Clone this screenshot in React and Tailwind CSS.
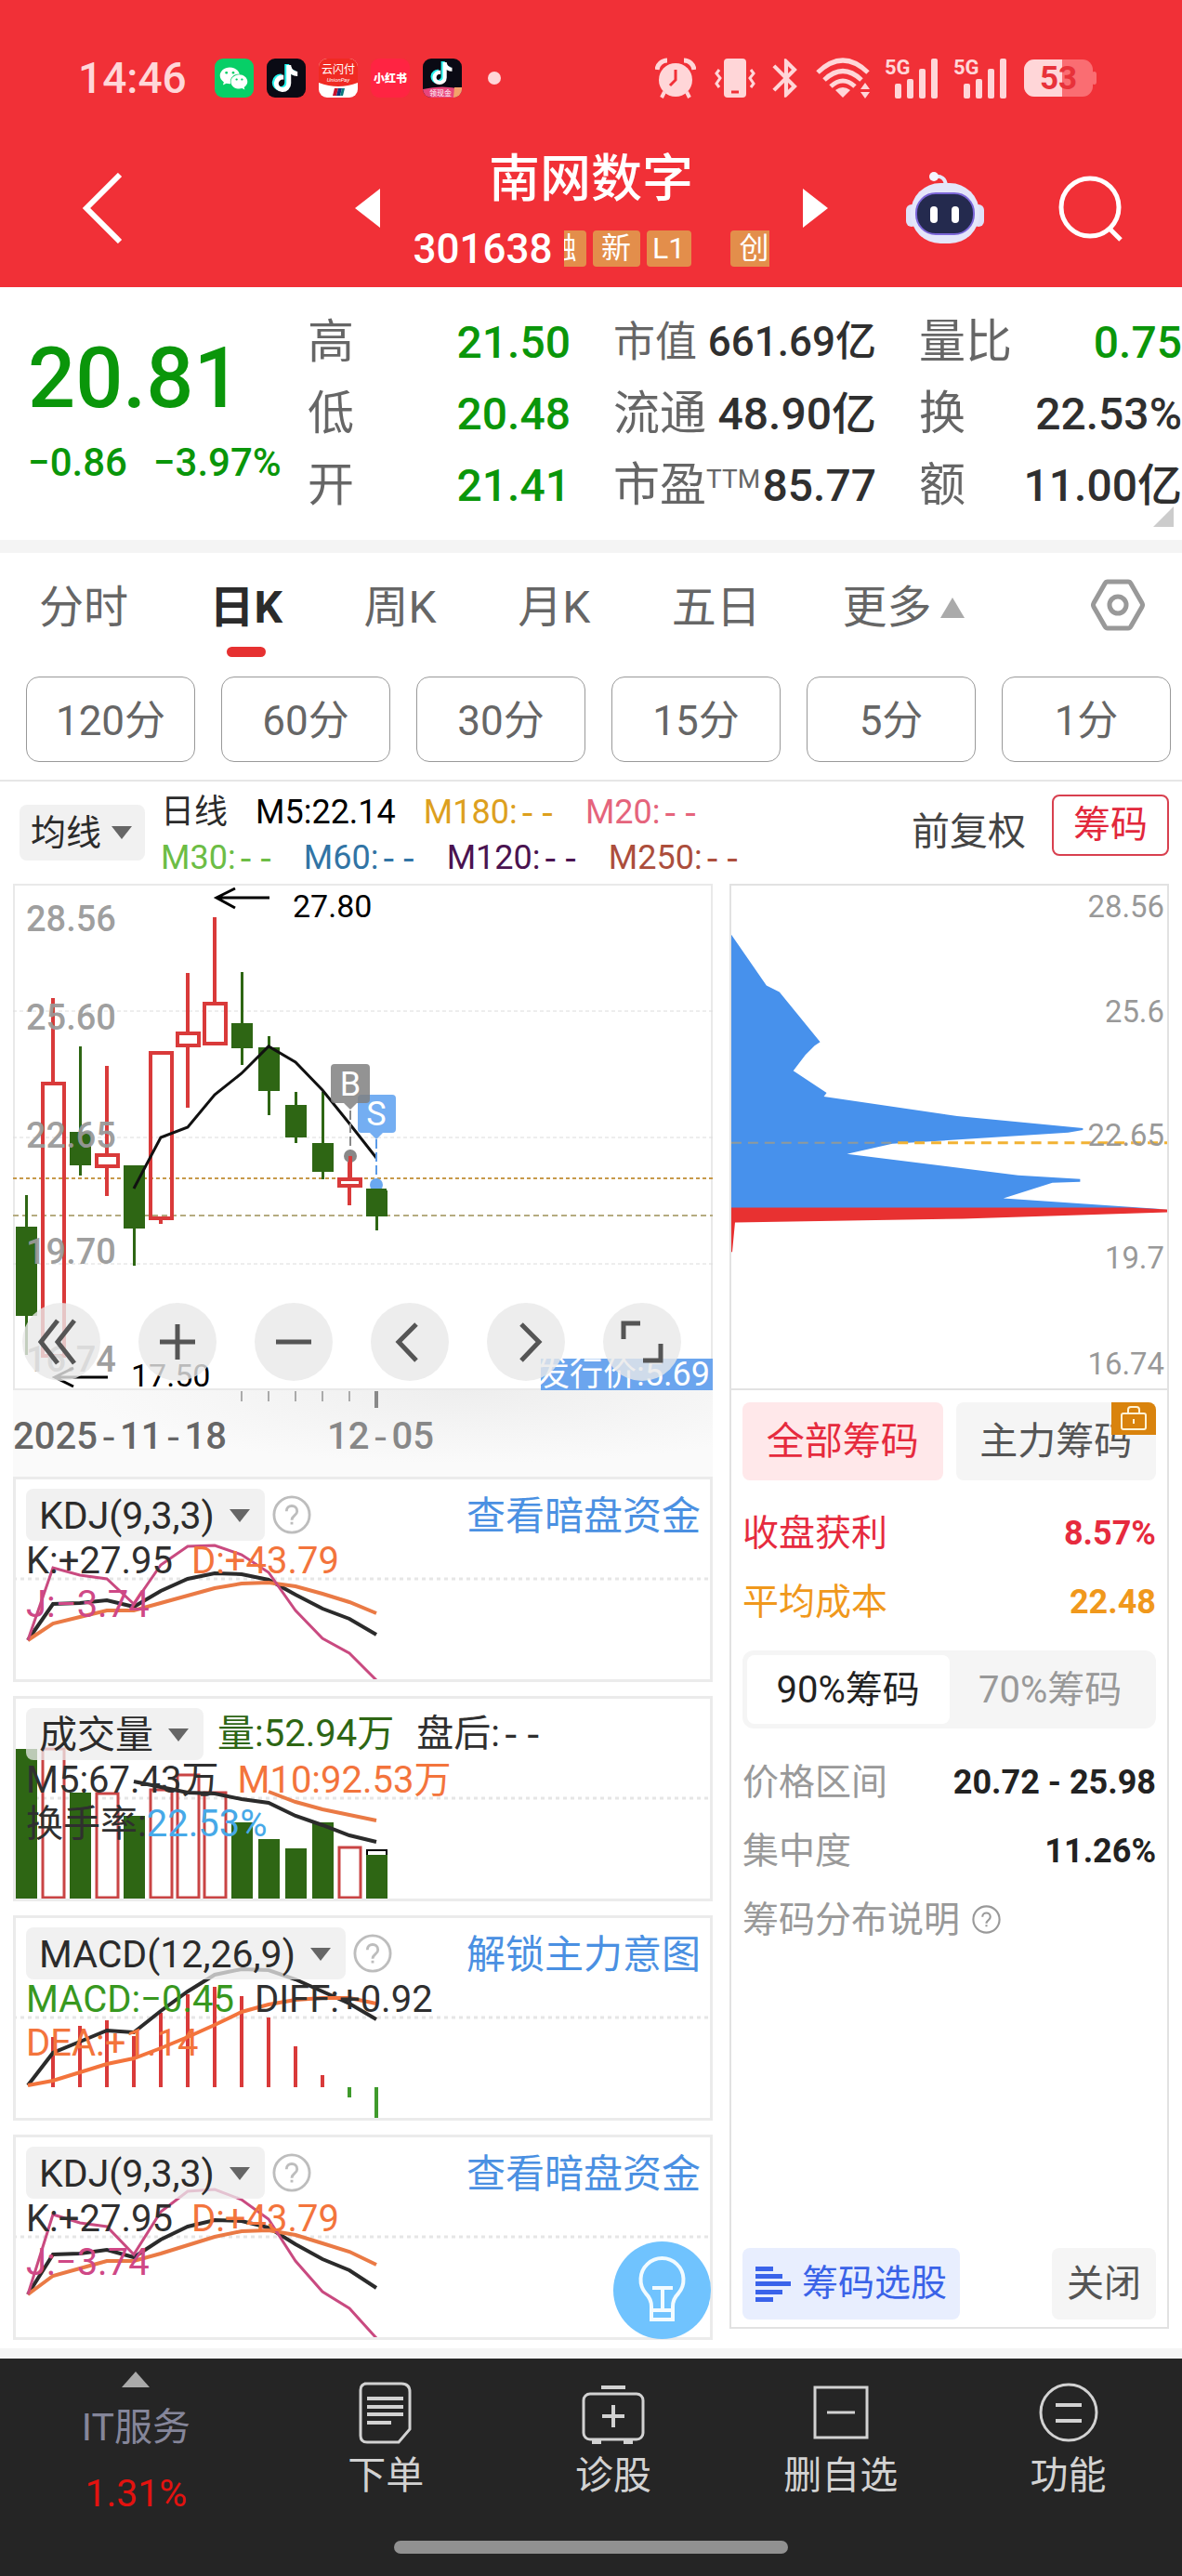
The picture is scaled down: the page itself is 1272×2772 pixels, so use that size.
import React, { useState } from "react";
import { FaWeixin } from "react-icons/fa";
import { FaTiktok } from "react-icons/fa6";
import { MdBluetooth } from "react-icons/md";

const candles = [
  { up: false, high: 335, top: 369, bottom: 465, low: 507 },
  { up: true, high: 123, top: 215, bottom: 508, low: 508 },
  { up: false, high: 175, top: 267, bottom: 303, low: 314 },
  { up: true, high: 196, top: 292, bottom: 304, low: 336 },
  { up: false, high: 303, top: 303, bottom: 371, low: 411 },
  { up: true, high: 182, top: 182, bottom: 360, low: 366 },
  { up: true, high: 96, top: 161, bottom: 174, low: 241 },
  { up: true, high: 36, top: 129, bottom: 172, low: 172 },
  { up: false, high: 95, top: 150, bottom: 177, low: 195 },
  { up: false, high: 164, top: 176, bottom: 223, low: 249 },
  { up: false, high: 224, top: 238, bottom: 273, low: 279 },
  { up: false, high: 224, top: 279, bottom: 310, low: 318 },
  { up: true, high: 293, top: 318, bottom: 325, low: 346 },
  { up: false, high: 325, top: 330, bottom: 358, low: 373 },
];

const volumes = [57, 57, 104, 105, 129, 101, 85, 104, 136, 154, 164, 136, 163, 171];
const volumeUp = [0, 1, 0, 1, 0, 1, 1, 1, 0, 0, 0, 0, 1, 0];

const kLine = [176, 137, 136, 133, 140, 123, 110, 104, 105, 111, 127, 142, 153, 170];
const dLine = [176, 158, 151, 144, 144, 136, 128, 120, 115, 114, 118, 126, 135, 147];
const jLine = [176, 98, 106, 110, 137, 95, 75, 74, 84, 103, 144, 174, 190, 219];

const diffLine = [183, 148, 136, 124, 126, 103, 82, 64, 58, 59, 69, 82, 95, 112];
const deaLine = [183, 178, 169, 160, 154, 143, 131, 118, 104, 96, 91, 89, 89, 95];
const macdBars = [185, 131, 119, 113, 130, 105, 85, 77, 87, 110, 141, 172, 196, 220];

const cx = (i) => 14 + i * 29;

// index of the first point, so that shorter averages start further right
const toPoints = (values, start = 0) =>
  values.map((y, i) => `${cx(i + start) + (i + start === 0 ? 2 : 0)},${y}`).join(" ");

function Help({ className }) {
  return (
    <svg viewBox="0 0 44 44" className={className} fill="none" stroke="currentColor" strokeWidth="3">
      <circle cx="22" cy="22" r="20" />
      <path d="M16 18c0-8 12-8 12 0 0 5-6 5-6 10M22 30v3" />
    </svg>
  );
}

function Picker({ label, options, className = "" }) {
  return (
    <label className={`relative inline-flex items-center rounded-lg bg-[#ececec]/75 ${className}`}>
      <select
        aria-label={label}
        className="appearance-none bg-transparent outline-none text-[#2b2b2b] pl-[14px] pr-[54px] h-full"
      >
        {options.map((o) => (
          <option key={o}>{o}</option>
        ))}
      </select>
      <svg viewBox="0 0 22 14" className="absolute right-[16px] w-[22px] h-[14px] pointer-events-none">
        <path d="M0 0h22L11 14z" fill="#666" />
      </svg>
    </label>
  );
}

function Signal({ className }) {
  return (
    <svg viewBox="0 0 58 44" className={`w-[58px] h-[44px] overflow-visible ${className}`} fill="currentColor">
      <text x="0" y="18" fontSize="22" fontWeight="700">5G</text>
      <rect x="11" y="28" width="7" height="16" rx="2" />
      <rect x="24" y="23" width="7" height="21" rx="2" />
      <rect x="37" y="12" width="7" height="32" rx="2" />
      <rect x="50" y="1" width="7" height="43" rx="2" />
    </svg>
  );
}

function StatusBar() {
  return (
    <div className="flex items-center justify-between h-[56px] pl-[84px] pr-[92px] text-[#ffd6d8]">
      <div className="flex items-center gap-[14px]">
        <span className="text-[46px] leading-none font-medium mr-[16px]">14:46</span>
        <span className="w-[42px] h-[42px] rounded-[9px] bg-[#07cf67] flex items-center justify-center">
          <FaWeixin className="w-[31px] h-[31px] text-white" />
        </span>
        <span className="w-[42px] h-[42px] rounded-[9px] bg-[#0a0a14] flex items-center justify-center">
          <FaTiktok className="w-[29px] h-[29px] text-white drop-shadow-[-2px_-1px_0_#25f4ee]" />
        </span>
        <svg viewBox="0 0 42 42" className="w-[42px] h-[42px] rounded-[9px] bg-white">
          <path d="M0 0h42v26q-21 8-42 0z" fill="#f02a23" />
          <text x="21" y="16" fontSize="12" textAnchor="middle" fill="#fff">云闪付</text>
          <text x="21" y="25" fontSize="6" fontStyle="italic" textAnchor="middle" fill="#fff">UnionPay</text>
          <path d="M17 32h4l-2 8h-4z" fill="#c8102e" />
          <path d="M21 32h4l-2 8h-4z" fill="#12357c" />
          <path d="M25 32h3l-2 8h-3z" fill="#0a7b80" />
        </svg>
        <svg viewBox="0 0 42 42" className="w-[42px] h-[42px] rounded-[9px] bg-[#ff2442]">
          <text x="21" y="26" fontSize="12" fontWeight="900" textAnchor="middle" fill="#fff">小红书</text>
        </svg>
        <span className="relative w-[42px] h-[42px] rounded-[9px] bg-[#0a0a14] flex justify-center overflow-hidden pt-[4px]">
          <FaTiktok className="w-[24px] h-[24px] text-white drop-shadow-[-2px_-1px_0_#25f4ee]" />
          <svg viewBox="0 0 42 12" className="absolute left-0 bottom-0 w-[42px] h-[12px]">
            <path d="M0 3q21-5 42 0v9H0z" fill="#e8457c" />
            <path d="M34 1h8v11h-9z" fill="#f3a36a" />
            <text x="19" y="10" fontSize="8" textAnchor="middle" fill="#fff">领现金</text>
          </svg>
        </span>
        <span className="w-[14px] h-[14px] rounded-full bg-[#ffd6d8] ml-[14px]" />
      </div>

      <div className="flex items-center">
        <svg viewBox="0 0 44 44" className="w-[44px] h-[44px]" fill="none">
          <path d="M2 13a11 11 0 0 1 11-10M42 13a11 11 0 0 0-11-10" stroke="currentColor" strokeWidth="5" />
          <path d="M10 37l-3 6M34 37l3 6" stroke="currentColor" strokeWidth="4" />
          <circle cx="22" cy="24" r="18" fill="currentColor" />
          <path d="M22 13v11l-6 6" stroke="#f13037" strokeWidth="3" />
        </svg>
        <svg viewBox="0 0 44 44" className="w-[44px] h-[44px] ml-[20px]" fill="none">
          <rect x="10" y="1" width="24" height="42" rx="4" fill="currentColor" />
          <path d="M18 37h8" stroke="#f13037" strokeWidth="3" />
          <path d="M5 13l-3 4 4 5-4 6 3 4M39 13l3 4-4 5 4 6-3 4" stroke="currentColor" strokeWidth="3" />
        </svg>
        <MdBluetooth className="w-[50px] h-[50px] ml-[8px]" />
        <svg viewBox="0 0 60 44" className="w-[60px] h-[44px] ml-[7px]" fill="none">
          <path d="M2 16q27-26 54 0M9 24q20-19 40 0M16 31q13-12 26 0" stroke="currentColor" strokeWidth="5" />
          <path d="M29 43l-8-8q8-6 16 0z" fill="currentColor" />
          <path d="M48 34l5-7 5 7zM48 37l5 7 5-7z" fill="currentColor" />
        </svg>
        <Signal className="ml-[14px]" />
        <Signal className="ml-[16px]" />
        <svg viewBox="0 0 78 42" className="w-[78px] h-[42px] ml-[18px]">
          <rect x="0" y="1" width="74" height="40" rx="11" fill="#fa6d72" />
          <rect x="73" y="14" width="5" height="14" rx="3" fill="#fa6d72" />
          <path d="M11 1h30v40H11a11 11 0 0 1-11-11V12A11 11 0 0 1 11 1z" fill="#ffd6d8" />
          <text x="37" y="33" fontSize="35" fontWeight="700" textAnchor="middle" fill="#e8323a">53</text>
        </svg>
      </div>
    </div>
  );
}

function Header() {
  const tag = "shrink-0 h-[39px] rounded-[4px] bg-[#e38e4b] text-[32px] leading-[39px] text-center text-white";
  return (
    <header className="bg-[#f13037] text-white pt-[56px] h-[309px]">
      <StatusBar />
      <div className="grid grid-cols-[1fr_auto_1fr] items-center h-[197px] pt-[26px]">
        <div className="pl-[88px]">
          <button aria-label="返回" className="block">
            <svg viewBox="0 0 44 76" className="w-[44px] h-[76px]" fill="none">
              <path d="M41 2L5 38l36 36" stroke="#fff" strokeWidth="6" />
            </svg>
          </button>
        </div>

        <div className="flex items-center">
          <button aria-label="上一只">
            <svg viewBox="0 0 27 42" className="w-[27px] h-[42px]">
              <path d="M27 0v42L0 21z" fill="#fff" />
            </svg>
          </button>
          <div className="w-[383px] mx-[36px] pt-[12px]">
            <h1 className="text-[55px] leading-[76px] font-medium text-center">南网数字</h1>
            <div className="flex items-center h-[76px]">
              <span className="text-[44px] leading-none font-medium w-[162px] shrink-0">301638</span>
              <div className="flex-1 overflow-hidden">
                <div className="flex gap-[7px] ml-[-28px]">
                  <span className={`${tag} w-[52px]`}>融</span>
                  <span className={`${tag} w-[51px]`}>新</span>
                  <span className={`${tag} w-[48px]`}>L1</span>
                  <span className={`${tag} w-[52px] ml-[35px]`}>创</span>
                </div>
              </div>
            </div>
          </div>
          <button aria-label="下一只">
            <svg viewBox="0 0 27 42" className="w-[27px] h-[42px]">
              <path d="M0 0v42l27-21z" fill="#fff" />
            </svg>
          </button>
        </div>

        <div className="flex items-center justify-end gap-[78px] pr-[62px]">
          <button aria-label="智能助手">
            <svg viewBox="0 0 86 80" className="w-[86px] h-[80px]">
              <path d="M31 6q12-2 13 10" stroke="#e6e8fb" strokeWidth="4" fill="none" />
              <circle cx="31" cy="6" r="5" fill="#f5f6ff" />
              <rect x="1" y="36" width="12" height="24" rx="6" fill="#dfe1f8" />
              <rect x="73" y="36" width="12" height="24" rx="6" fill="#dfe1f8" />
              <rect x="6" y="13" width="74" height="65" rx="32" fill="#e4e6fa" />
              <rect x="12" y="24" width="62" height="44" rx="21" fill="#242a4e" stroke="#7b66d8" strokeWidth="2" />
              <rect x="27" y="38" width="8" height="18" rx="4" fill="#fff" />
              <rect x="50" y="38" width="8" height="18" rx="4" fill="#fff" />
            </svg>
          </button>
          <button aria-label="搜索">
            <svg viewBox="0 0 72 72" className="w-[72px] h-[72px]" fill="none" stroke="#fff" strokeWidth="5">
              <circle cx="35" cy="35" r="31" />
              <path d="M56 58l12 12" />
            </svg>
          </button>
        </div>
      </div>
    </header>
  );
}

function Stat({ name, sup, value, color = "text-[#2f2f2f]", small }) {
  return (
    <div className={`flex justify-between whitespace-nowrap h-[77px] ${small ? "text-[45px]" : "text-[50px]"}`}>
      <dt className="text-[#666]">
        {name}
        {sup && <sup className="text-[28px]">{sup}</sup>}
      </dt>
      <dd className={`font-medium ${small ? "text-[44px]" : "text-[48px]"} ${color}`}>{value}</dd>
    </div>
  );
}

function Quote() {
  const green = "text-[#0a960a]";
  return (
    <section className="grid grid-cols-[285px_repeat(3,minmax(0,1fr))] gap-x-[46px] h-[286px] pt-[21px] border-b-[14px] border-[#f4f4f4] relative leading-[77px]">
      <div className="pl-[30px] text-[#0a960a] font-medium whitespace-nowrap">
        <p className="text-[90px] leading-[120px] pt-[18px]">20.81</p>
        <p className="text-[42px] leading-[60px] flex gap-[28px]">
          <span>−0.86</span>
          <span>−3.97%</span>
        </p>
      </div>
      <dl>
        <Stat name="高" value="21.50" color={green} />
        <Stat name="低" value="20.48" color={green} />
        <Stat name="开" value="21.41" color={green} />
      </dl>
      <dl>
        <Stat name="市值" value="661.69亿" small />
        <Stat name="流通" value="48.90亿" />
        <Stat name="市盈" sup="TTM" value="85.77" />
      </dl>
      <dl>
        <Stat name="量比" value="0.75" color={green} />
        <Stat name="换" value="22.53%" />
        <Stat name="额" value="11.00亿" />
      </dl>
      <svg viewBox="0 0 22 22" className="absolute right-[9px] bottom-[14px] w-[22px] h-[22px]">
        <path d="M22 0v22H0z" fill="#ccc" />
      </svg>
    </section>
  );
}

function Periods() {
  const [active, setActive] = useState("日K");
  const tabs = ["分时", "日K", "周K", "月K", "五日"];
  const minutes = ["120分", "60分", "30分", "15分", "5分", "1分"];

  return (
    <section className="border-b-2 border-[#e6e6e6] h-[246px]">
      <div className="flex items-start justify-between pl-[42px] pr-[40px] pt-[24px] h-[133px] text-[48px] leading-[70px] text-[#666]">
        {tabs.map((t) => (
          <button key={t} onClick={() => setActive(t)} className="flex flex-col items-center">
            <span className={active === t ? "font-bold text-[#2b2b2b]" : ""}>{t}</span>
            {active === t && <span className="w-[42px] h-[11px] rounded-full bg-[#e63131] mt-[7px]" />}
          </button>
        ))}
        <button className="flex items-center gap-[10px]">
          更多
          <svg viewBox="0 0 26 22" className="w-[26px] h-[22px]">
            <path d="M13 0l13 22H0z" fill="#aaa" />
          </svg>
        </button>
        <button aria-label="设置" className="ml-[48px] mt-[4px]">
          <svg viewBox="0 0 58 56" className="w-[58px] h-[56px]" fill="none" stroke="#999" strokeWidth="5">
            <path d="M18 3h22q2 0 3 2l12 21q1 2 0 4L43 51q-1 2-3 2H18q-2 0-3-2L3 30q-1-2 0-4L15 5q1-2 3-2z" />
            <circle cx="29" cy="28" r="9" />
          </svg>
        </button>
      </div>
      <div className="grid grid-cols-6 gap-[28px] pl-[28px] pr-[12px]">
        {minutes.map((m) => (
          <button key={m} className="h-[92px] pt-[4px] rounded-[14px] border border-[#999] text-[44px] text-[#666]">
            {m}
          </button>
        ))}
      </div>
    </section>
  );
}

// placeholder for a value that is not there yet
function Blank() {
  return <span className="font-['Liberation_Mono',monospace]">--</span>;
}

function Averages() {
  return (
    <section className="flex items-center h-[110px] pl-[21px] pr-[14px] text-[36px]">
      <Picker
        label="主图指标"
        options={["均线"]}
        className="h-[60px] text-[38px] [&_select]:pl-[12px] [&_select]:pr-[46px] [&_svg]:right-[14px]"
      />
      <div className="flex-1 ml-[17px] pt-[8px] leading-[47px] whitespace-nowrap">
        <div className="flex gap-[30px] text-black">
          <span className="text-[#2b2b2b]">日线</span>
          <span>M5:22.14</span>
          <span className="text-[#dda01e]">M180:<Blank /></span>
          <span className="text-[#e5647c]">M20:<Blank /></span>
        </div>
        <div className="flex gap-[30px]">
          <span className="text-[#6cbd45]">M30:<Blank /></span>
          <span className="text-[#3174a5]">M60:<Blank /></span>
          <span className="text-[#4a1350]">M120:<Blank /></span>
          <span className="text-[#ac4e3c]">M250:<Blank /></span>
        </div>
      </div>
      <button className="text-[41px] text-[#444] mr-[28px]">前复权</button>
      <button className="w-[126px] h-[66px] mb-[16px] rounded-lg border-2 border-[#d8404f] text-[#e2283c] text-[40px] leading-[62px]">
        筹码
      </button>
    </section>
  );
}

function RoundButton({ label, children }) {
  return (
    <button aria-label={label} className="w-[84px] h-[84px] rounded-full bg-[#e9e9e9]/80">
      <svg viewBox="0 0 84 84" className="w-full h-full" fill="none" stroke="#555" strokeWidth="5">
        {children}
      </svg>
    </button>
  );
}

function KChart() {
  return (
    <div className="relative">
      <svg viewBox="0 0 753 545" className="block w-full">
        <rect x="1" y="1" width="751" height="543" fill="#fff" stroke="#e9e9e9" strokeWidth="2" />
        {[137, 273, 409].map((y) => (
          <path key={y} d={`M0 ${y}h753`} stroke="#dcdcdc" strokeWidth="1" strokeDasharray="4 3" />
        ))}
        <path d="M0 317h753" stroke="#c79a4b" strokeWidth="2" strokeDasharray="4 3" />
        <path d="M0 357h753" stroke="#b5ab80" strokeWidth="2" strokeDasharray="6 4" />

        {candles.map((c, i) =>
          c.up ? (
            <g key={i} stroke="#d93a3a" strokeWidth="4" fill="none">
              <path d={`M${cx(i)} ${c.high}V${c.top}M${cx(i)} ${c.bottom}V${c.low}`} />
              <rect x={cx(i) - 11} y={c.top} width="23" height={c.bottom - c.top} />
            </g>
          ) : (
            <g key={i} fill="#2e6614">
              <rect x={cx(i) - 1} y={c.high} width="3" height={c.low - c.high} />
              <rect x={cx(i) - 11} y={c.top} width="23" height={c.bottom - c.top} />
            </g>
          )
        )}
        <g fill="#999" fillOpacity="0.95" fontSize="38" fontWeight="500">
          <text x="14" y="51">28.56</text>
          <text x="14" y="157">25.60</text>
          <text x="14" y="284">22.65</text>
          <text x="14" y="409">19.70</text>
          <text x="14" y="525">16.74</text>
        </g>
        <polyline
          points={toPoints([328, 273, 262, 227, 204, 175, 192, 222, 258, 295], 4)}
          fill="none"
          stroke="#111"
          strokeWidth="3"
        />

        {/* trade marks */}
        <path d="M363 244v49" stroke="#888" strokeWidth="2" strokeDasharray="10 4" />
        <circle cx="363" cy="293" r="7" fill="#888" />
        <path d="M391 275v50" stroke="#5b9be8" strokeWidth="2" strokeDasharray="10 4" />
        <circle cx="391" cy="324" r="7" fill="#6aa8f0" />
        <path d="M363 293v25" stroke="#d93a3a" strokeWidth="4" />
        <path d="M380 330h22" stroke="#2e6614" strokeWidth="4" />
        <path d="M375 227h33q4 0 4 4v33q0 4-4 4h-10l-7 7-7-7h-9q-4 0-4-4v-33q0-4 4-4z" fill="#74aef2" />
        <path d="M346 194h34q4 0 4 4v34q0 4-4 4h-10l-7 7-7-7h-10q-4 0-4-4v-34q0-4 4-4z" fill="#808080" fillOpacity="0.85" />
        <text x="363" y="228" fontSize="36" textAnchor="middle" fill="#fff">B</text>
        <text x="391" y="260" fontSize="36" textAnchor="middle" fill="#fff">S</text>

        <g stroke="#000" strokeWidth="3" fill="none">
          <path d="M276 15h-57M239 5l-20 10 20 11" />
          <path d="M102 531H45M65 521l-20 10 20 10" />
        </g>
        <g fontSize="34">
          <text x="301" y="36">27.80</text>
          <text x="127" y="541">17.50</text>
        </g>
        <rect x="568" y="511" width="185" height="34" fill="#6ba5ee" />
        <text x="750" y="540" fontSize="36" textAnchor="end" fill="#fff">发行价:5.69</text>
      </svg>

      <div className="absolute inset-x-0 bottom-[10px] flex justify-between pl-[10px] pr-[34px]">
        <RoundButton label="最早">
          <path d="M38 19L20 42l18 23M56 19L38 42l18 23" />
        </RoundButton>
        <RoundButton label="放大">
          <path d="M42 23v38M23 42h38" />
        </RoundButton>
        <RoundButton label="缩小">
          <path d="M23 42h38" />
        </RoundButton>
        <RoundButton label="左移">
          <path d="M49 23L30 42l19 20" />
        </RoundButton>
        <RoundButton label="右移">
          <path d="M37 23l19 19-19 20" />
        </RoundButton>
        <RoundButton label="全屏">
          <path d="M22 39V22h18M62 44v18H43" />
        </RoundButton>
      </div>
    </div>
  );
}

function TimeAxis() {
  return (
    <svg
      viewBox="0 0 753 93"
      className="block w-full bg-[radial-gradient(ellipse_at_65%_0%,#eeeeee,#fafafa_60%)]"
    >
      {[8, 9, 10, 11, 12].map((i) => (
        <path key={i} d={`M${cx(i)} 1v11`} stroke="#aaa" strokeWidth="2" />
      ))}
      <path d={`M${cx(13)} 1v18`} stroke="#888" strokeWidth="4" />
      <g fontSize="40" fontWeight="500">
        <text x="0" y="63" fill="#666">
          2025<tspan className="font-['Liberation_Mono']">-</tspan>11<tspan className="font-['Liberation_Mono']">-</tspan>18
        </text>
        <text x="338" y="63" fill="#888">
          12<tspan className="font-['Liberation_Mono']">-</tspan>05
        </text>
      </g>
    </svg>
  );
}

function Indicator({ name, help, link, chart, head, children }) {
  return (
    <div className="relative mb-[15px] border-[3px] border-[#ebebeb] h-[221px] overflow-hidden">
      <svg viewBox="3 3 747 215" className="absolute inset-0 w-full h-full" fill="none" strokeWidth="4">
        <path d="M0 110h753" stroke="#e6e6e6" strokeWidth="3" strokeDasharray="4 4" />
        {chart}
      </svg>
      <div className="relative pt-[10px] pl-[11px] pr-[10px] text-[40px] leading-[47px] whitespace-nowrap">
        <div className="flex items-center h-[56px] mb-[-2px]">
          <Picker label="副图指标" options={[name]} className="h-[56px] pt-[2px] text-[41px]" />
          {help && (
            <button aria-label="指标说明" className="ml-[8px] text-[#bdbdbd]">
              <Help className="w-[42px] h-[42px]" />
            </button>
          )}
          {head}
          {link && (
            <a href="#" className="ml-auto pt-[2px] text-[42px] text-[#4a90e2]">
              {link}
            </a>
          )}
        </div>
        {children}
      </div>
    </div>
  );
}

function Kdj({ scale = 1 }) {
  const fit = (values) => toPoints(values.map((y) => Math.round(220 - (220 - y) * scale)));
  return (
    <Indicator
      name="KDJ(9,3,3)"
      help
      link="查看暗盘资金"
      chart={
        <>
          <polyline points={fit(kLine)} stroke="#2b2b2b" />
          <polyline points={fit(dLine)} stroke="#ea7a45" />
          <polyline points={fit(jLine)} stroke="#c94a80" strokeWidth="3" />
        </>
      }
    >
      <p className="text-[#2f2f2f]">
        K:+27.95 <span className="text-[#f3743c] ml-[10px]">D:+43.79</span>
      </p>
      <p className="text-[#cf4886]">J:−3.74</p>
    </Indicator>
  );
}

function Volume() {
  return (
    <Indicator
      name="成交量"
      head={
        <span className="ml-[15px] pt-[2px] text-[#2f2f2f]">
          <span className="text-[#2e6614] mr-[24px]">量:52.94万</span>盘后:<Blank />
        </span>
      }
      chart={
        <>
          {volumes.map((y, i) =>
            volumeUp[i] ? (
              <rect key={i} x={cx(i) - 11} y={y} width="23" height={217 - y} stroke="#c94444" strokeWidth="3" />
            ) : (
              <rect key={i} x={cx(i) - 11} y={y} width="23" height={220 - y} fill="#2e6614" />
            )
          )}
          <path d={`M${cx(13) - 10} 171v-5h21v5`} stroke="#000" strokeWidth="2" />
          <polyline points={toPoints([92, 98, 104, 105, 111, 115, 129, 139, 150, 157], 4)} stroke="#2b2b2b" />
          <polyline points={toPoints([103, 114, 122, 128, 134], 9)} stroke="#ea7a45" />
        </>
      }
    >
      <p className="text-[#2f2f2f]">
        M5:67.43万 <span className="text-[#f3743c] ml-[10px]">M10:92.53万</span>
      </p>
      <p className="text-[#2f2f2f]">
        换手率:<span className="text-[#47a9e8]">22.53%</span>
      </p>
    </Indicator>
  );
}

function Macd() {
  return (
    <Indicator
      name="MACD(12,26,9)"
      help
      link="解锁主力意图"
      chart={
        <>
          {macdBars.map((y, i) => (
            <path key={i} d={`M${cx(i)} 185V${y}`} stroke={y > 185 ? "#3f9a2c" : "#d93a3a"} />
          ))}
          <polyline points={toPoints(diffLine)} stroke="#2b2b2b" />
          <polyline points={toPoints(deaLine)} stroke="#f3743c" />
        </>
      }
    >
      <p className="text-[#2f2f2f]">
        <span className="text-[#38981f] mr-[12px]">MACD:−0.45</span> DIFF:+0.92
      </p>
      <p className="text-[#f3743c]">DEA:+1.14</p>
    </Indicator>
  );
}

function ChipChart() {
  return (
    <svg viewBox="0 0 471 543" className="block w-full border-b-2 border-[#e2e2e2]">
      <path
        d="M0 53L38 108 52 115 96 169 90 173 80 183 67 200 103 224 100 228 244 249 380 262V264L364 267 174 279 125 290 310 313 377 317V320L347 321 294 338 471 350H0z"
        fill="#4791ec"
      />
      <path d="M0 348H430L471 350V353L250 360 4 364 1 396H0z" fill="#e83131" />
      <path d="M0 278h174" stroke="#8f9a9c" strokeWidth="2" strokeDasharray="11 7" />
      <path d="M180 278h291" stroke="#f2b233" strokeWidth="3" strokeDasharray="11 7" />
      <g fontSize="33" fill="#999" textAnchor="end">
        <text x="468" y="34">28.56</text>
        <text x="468" y="148">25.6</text>
        <text x="468" y="281">22.65</text>
        <text x="468" y="414">19.7</text>
        <text x="468" y="528">16.74</text>
      </g>
    </svg>
  );
}

function ChipRow({ name, value, color }) {
  return (
    <div className={`flex justify-between ${color || ""}`}>
      <dt className={color ? "" : "text-[#999]"}>{name}</dt>
      <dd className="text-[36px] font-bold">{value}</dd>
    </div>
  );
}

function ChipPanel() {
  const [range, setRange] = useState(90);
  const seg = (v) => (range === v ? "bg-white text-[#222]" : "text-[#999]");

  return (
    <aside className="flex flex-col border-2 border-[#e2e2e2] h-[1555px]">
      <ChipChart />
      <div className="flex-1 flex flex-col px-[12px] pt-[13px] pb-[8px] text-[39px] leading-[74px] whitespace-nowrap">
        <div className="grid grid-cols-2 gap-[14px] text-[41px] leading-[84px]">
          <button className="rounded-lg bg-[#ffe8ea] text-[#e62b3e]">全部筹码</button>
          <button className="relative rounded-lg bg-[#f5f5f5] text-[#555]">
            主力筹码
            <span className="absolute right-0 top-0 w-[48px] h-[35px] rounded-tr-lg bg-[#d9830d] flex items-center justify-center">
              <svg viewBox="0 0 28 28" className="w-[28px] h-[28px]" fill="none" stroke="#fff3d6" strokeWidth="2">
                <rect x="1" y="9" width="26" height="17" rx="2" />
                <path d="M8 9V5q0-3 3-3h6q3 0 3 3v4M14 15v5" />
              </svg>
            </span>
          </button>
        </div>

        <dl className="pt-[20px]">
          <ChipRow name="收盘获利" value="8.57%" color="text-[#e62b3e]" />
          <ChipRow name="平均成本" value="22.48" color="text-[#f0981c]" />
        </dl>

        <div className="grid grid-cols-2 mt-[15px] p-[5px] rounded-xl bg-[#f5f5f5] text-[40px]">
          <button onClick={() => setRange(90)} className={`rounded-lg pt-[2px] leading-[72px] ${seg(90)}`}>90%筹码</button>
          <button onClick={() => setRange(70)} className={`rounded-lg pt-[2px] leading-[72px] ${seg(70)}`}>70%筹码</button>
        </div>

        <dl className="pt-[21px] text-[#222]">
          <ChipRow name="价格区间" value="20.72 - 25.98" />
          <ChipRow name="集中度" value="11.26%" />
        </dl>
        <button className="flex items-center gap-[13px] text-[#999]">
          筹码分布说明
          <Help className="w-[31px] h-[31px]" />
        </button>

        <div className="mt-auto flex justify-between leading-[77px]">
          <button className="flex items-center gap-[12px] pl-[14px] pr-[14px] rounded-lg bg-[#e8eefe] text-[#3a63e8]">
            <svg viewBox="0 0 38 38" className="w-[38px] h-[38px]" fill="#3a63ea">
              <path d="M0 0h19v5H0zM0 8h29v5H0zM0 16h38v5H0zM0 25h29v5H0zM0 33h19v5H0z" />
            </svg>
            筹码选股
          </button>
          <button className="px-[16px] rounded-lg bg-[#f5f5f5] text-[#555] text-[40px]">关闭</button>
        </div>
      </div>
    </aside>
  );
}

function NavItem({ label, children }) {
  return (
    <button className="flex flex-col items-center pt-[24px] text-[41px] leading-[56px] text-[#d2d2d2]">
      <svg viewBox="0 0 70 70" className="w-[70px] h-[70px] mb-[4px]" fill="none" stroke="#d2d2d2" strokeWidth="3">
        {children}
      </svg>
      {label}
    </button>
  );
}

function BottomNav() {
  return (
    <nav className="bg-[#252525] h-[235px]">
      <div className="grid grid-cols-[293fr_245fr_245fr_245fr_245fr] h-[196px]">
        <button className="flex flex-col items-center pt-[14px] leading-[71px] text-[41px]">
          <svg viewBox="0 0 30 17" className="w-[30px] h-[17px] mb-[8px]">
            <path d="M15 0l15 17H0z" fill="#aaa" />
          </svg>
          <span className="text-[#85869a]">IT服务</span>
          <span className="text-[#e3120f]">1.31%</span>
        </button>
        <NavItem label="下单">
          <path d="M12 3h40q9 0 9 9v40L49 66H15q-7 0-7-7V10q0-7 7-7z" />
          <path d="M15 19h39M15 28h39M15 36h39M15 45h26" strokeWidth="4" />
        </NavItem>
        <NavItem label="诊股">
          <rect x="3" y="14" width="64" height="49" rx="7" />
          <path d="M22 7h26M35 26v24M23 38h24M12 66h10M46 66h10" strokeWidth="4" />
        </NavItem>
        <NavItem label="删自选">
          <path d="M7 7h56v54H7z" />
          <path d="M20 34h30" />
        </NavItem>
        <NavItem label="功能">
          <circle cx="35" cy="34" r="30" />
          <path d="M21 26h28M21 43h28" strokeWidth="4" />
        </NavItem>
      </div>
      <div className="w-1/3 h-[14px] rounded-full bg-[#919191] mx-auto" />
    </nav>
  );
}

export default function App() {
  return (
    <div className="bg-white font-[Roboto,'Noto_Sans_CJK_SC',sans-serif] overflow-hidden">
      <Header />
      <Quote />
      <Periods />
      <Averages />
      <main className="grid grid-cols-[753fr_473fr] items-start gap-x-[18px] px-[14px] pb-[9px] border-b-[11px] border-[#f4f4f4]">
        <div className="relative">
          <KChart />
          <TimeAxis />
          <Kdj />
          <Volume />
          <Macd />
          <div className="mb-[-15px]">
            <Kdj scale={1.1} />
          </div>
          <button aria-label="提示" className="absolute right-[2px] bottom-[1px] w-[105px] h-[105px] rounded-full bg-[#70c3fe]">
            <svg viewBox="0 0 105 105" className="w-full h-full" fill="none" stroke="#f2fbff" strokeWidth="4">
              <path d="M41 70q0-8-6-14a23 23 0 1 1 35 0q-6 6-6 14v14H41z" />
              <path d="M41 74h23M42 50h22M53 50v24" />
            </svg>
          </button>
        </div>
        <ChipPanel />
      </main>
      <BottomNav />
    </div>
  );
}
